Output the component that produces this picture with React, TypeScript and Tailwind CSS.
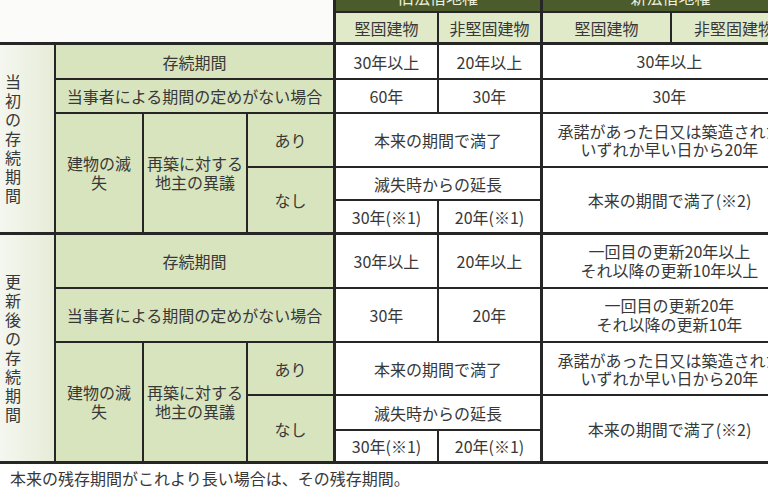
import type { ReactNode } from 'react'

const cols = 'grid grid-cols-[56px_88px_104px_88px_103px_104px_129px_126px]'

type CellProps = {
  className?: string
  children?: ReactNode
  thickRight?: boolean
  thickBottom?: boolean
}

// one table cell: right + bottom rule, thicker where the table splits
const Cell = ({ className = '', children, thickRight, thickBottom }: CellProps) => (
  <div
    className={`flex items-center justify-center text-center border-[#262626] ${
      thickRight ? 'border-r-[3px]' : 'border-r-2'
    } ${thickBottom ? 'border-b-[3px]' : 'border-b-2'} ${className}`}
  >
    {children}
  </div>
)

type SectionProps = {
  label: string
  rows: string
  period: [string, string, ReactNode]
  noTerm: [string, string, ReactNode]
}

const Section = ({ label, rows, period, noTerm }: SectionProps) => (
  <div className={`${cols} ${rows}`}>
    {/* vertical section title */}
    <Cell
      thickBottom
      className="col-start-1 row-start-1 row-span-5 !justify-start pl-[5px] bg-gradient-to-r from-[#f5f7f0] to-[#e6ecd7]"
    >
      <div className="flex flex-col leading-[19px]">
        {label.split('').map((ch, i) => (
          <span key={i}>{ch}</span>
        ))}
      </div>
    </Cell>

    <Cell thickRight className="col-start-2 col-span-3 row-start-1 bg-[#d8e4bd]">存続期間</Cell>
    <Cell className="col-start-5 row-start-1">{period[0]}</Cell>
    <Cell thickRight className="col-start-6 row-start-1">{period[1]}</Cell>
    <Cell className="col-start-7 col-span-2 row-start-1 leading-[19px]">{period[2]}</Cell>

    <Cell thickRight className="col-start-2 col-span-3 row-start-2 bg-[#d8e4bd]">
      当事者による期間の定めがない場合
    </Cell>
    <Cell className="col-start-5 row-start-2">{noTerm[0]}</Cell>
    <Cell thickRight className="col-start-6 row-start-2">{noTerm[1]}</Cell>
    <Cell className="col-start-7 col-span-2 row-start-2 leading-[19px]">{noTerm[2]}</Cell>

    <Cell thickBottom className="col-start-2 row-start-3 row-span-3 bg-[#d8e4bd] leading-[19px]">
      <div>
        建物の滅
        <br />失
      </div>
    </Cell>
    <Cell thickBottom className="col-start-3 row-start-3 row-span-3 bg-[#d8e4bd] leading-[19px]">
      <div>
        再築に対する
        <br />
        地主の異議
      </div>
    </Cell>
    <Cell thickRight className="col-start-4 row-start-3 bg-[#d8e4bd]">あり</Cell>
    <Cell thickRight thickBottom className="col-start-4 row-start-4 row-span-2 bg-[#d8e4bd]">
      なし
    </Cell>

    <Cell thickRight className="col-start-5 col-span-2 row-start-3">本来の期間で満了</Cell>
    <Cell className="col-start-7 col-span-2 row-start-3 leading-[18px] whitespace-nowrap">
      <div>
        承諾があった日又は築造された
        <br />
        いずれか早い日から20年
      </div>
    </Cell>

    <Cell thickRight className="col-start-5 col-span-2 row-start-4">滅失時からの延長</Cell>
    <Cell thickBottom className="col-start-5 row-start-5">30年(※1)</Cell>
    <Cell thickRight thickBottom className="col-start-6 row-start-5">20年(※1)</Cell>
    <Cell thickBottom className="col-start-7 col-span-2 row-start-4 row-span-2">
      本来の期間で満了(※2)
    </Cell>
  </div>
)

export default function App() {
  return (
    <div
      className="w-[768px] h-[495px] overflow-hidden bg-white text-[16px] text-[#383838]"
      style={{ fontFamily: '"Noto Sans CJK JP", "Noto Sans", sans-serif' }}
    >
      <div className="w-[798px]">
        {/* header */}
        <div className={`${cols} grid-rows-[13px_32px]`}>
          <div className="col-start-1 col-span-4 row-start-1 row-span-2 bg-[#fbfbfa] border-r-[3px] border-b-[3px] border-[#262626]" />
          <div className="col-start-5 col-span-2 row-start-1 flex items-end justify-center overflow-hidden bg-[#4b5b2b] text-[#eef0dc] border-r-[3px] border-b-2 border-[#262626] pb-[6px] leading-4">
            旧法借地権
          </div>
          <div className="col-start-7 col-span-2 row-start-1 flex items-end justify-center overflow-hidden bg-[#4b5b2b] text-[#eef0dc] border-b-2 border-[#262626] pb-[6px] leading-4">
            新法借地権
          </div>
          <Cell thickBottom className="col-start-5 row-start-2 bg-[#e0e9c8]">堅固建物</Cell>
          <Cell thickBottom thickRight className="col-start-6 row-start-2 bg-[#e0e9c8]">非堅固建物</Cell>
          <Cell thickBottom className="col-start-7 row-start-2 bg-[#e0e9c8]">堅固建物</Cell>
          <Cell thickBottom className="col-start-8 row-start-2 bg-[#e0e9c8]">非堅固建物</Cell>
        </div>

        <Section
          label="当初の存続期間"
          rows="grid-rows-[35px_34px_54px_33px_34px]"
          period={['30年以上', '20年以上', '30年以上']}
          noTerm={['60年', '30年', '30年']}
        />

        <Section
          label="更新後の存続期間"
          rows="grid-rows-[54px_54px_53px_35px_33px]"
          period={[
            '30年以上',
            '20年以上',
            <div>
              一回目の更新20年以上
              <br />
              それ以降の更新10年以上
            </div>,
          ]}
          noTerm={[
            '30年',
            '20年',
            <div>
              一回目の更新20年
              <br />
              それ以降の更新10年
            </div>,
          ]}
        />

        <p className="pl-[10px] pt-[4px] leading-5">本来の残存期間がこれより長い場合は、その残存期間。</p>
      </div>
    </div>
  )
}
